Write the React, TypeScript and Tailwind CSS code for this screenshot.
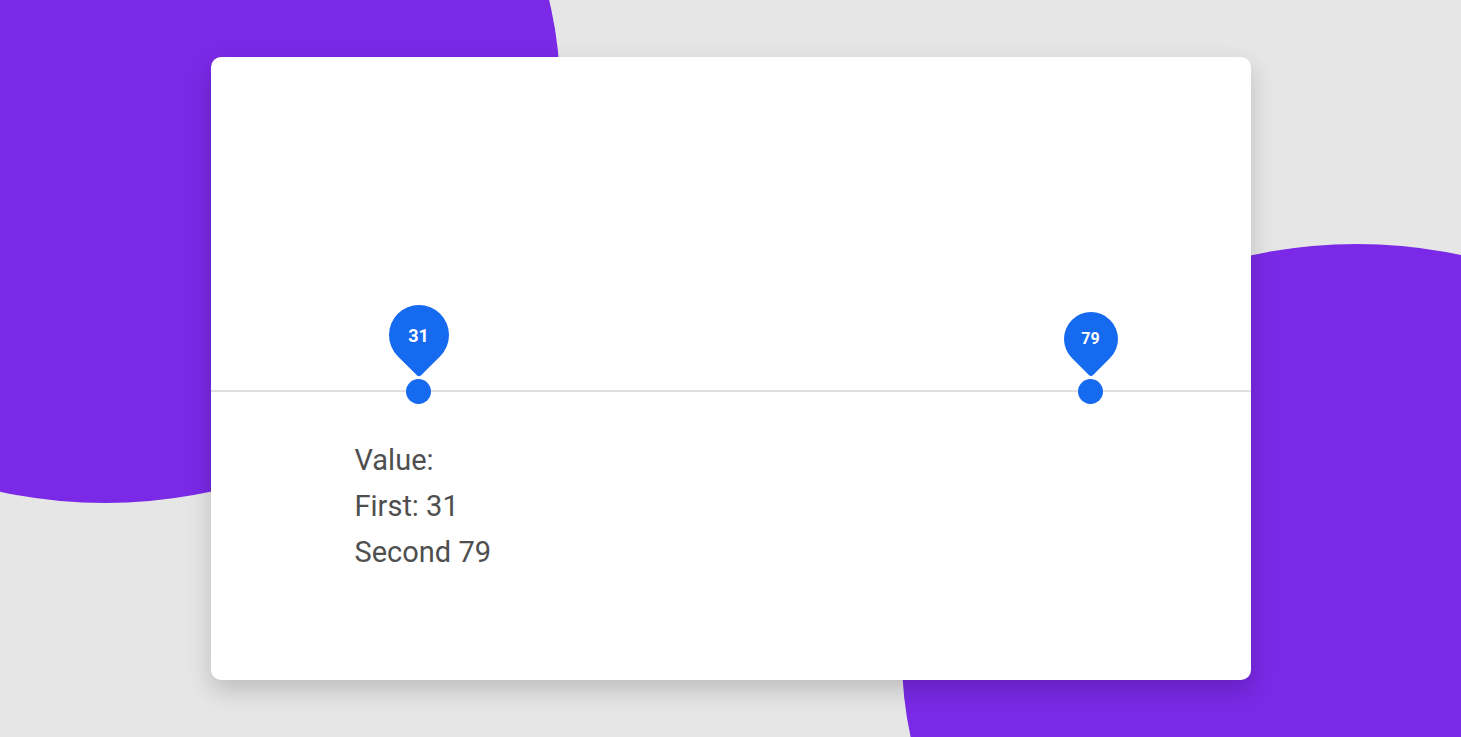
import type { CSSProperties } from 'react'

const TRACK_ORIGIN = -226
const STEP = 14

interface PinProps {
  value: number
  active?: boolean
}

function SliderThumb({ value, active }: PinProps) {
  const style: CSSProperties = { left: TRACK_ORIGIN + value * STEP }

  return (
    <div className="absolute top-1/2" style={style}>
      {active ? (
        <div className="absolute left-[-30px] top-[-86px] flex size-[60px] items-center justify-center">
          <div className="absolute inset-0 rotate-[-45deg] rounded-[50%_50%_50%_3px] bg-[#166af0]" />
          <span className="relative text-[18px] font-bold text-white">{value}</span>
        </div>
      ) : (
        <div className="absolute left-[-27px] top-[-79px] flex size-[54px] items-center justify-center">
          <div className="absolute inset-0 rotate-[-45deg] rounded-[50%_50%_50%_3px] bg-[#166af0]" />
          <span className="relative text-[16px] font-bold text-white">{value}</span>
        </div>
      )}
      <div className="absolute left-[-12.5px] top-[-12.5px] size-[25px] rounded-full bg-[#166af0]" />
    </div>
  )
}

export default function App() {
  const first = 31
  const second = 79

  return (
    <div className="relative flex h-[737px] w-full items-center justify-center overflow-hidden bg-[#e6e6e6] font-['Roboto',sans-serif]">
      <div className="absolute left-[-350px] top-[-323px] h-[826px] w-[910px] rounded-[50%] bg-[#7a29e6]" />
      <div className="absolute left-[902px] top-[244px] h-[826px] w-[910px] rounded-[50%] bg-[#7a29e6]" />

      <div className="relative flex h-[623px] w-[1040px] flex-col rounded-[10px] bg-white shadow-[0_10px_25px_rgba(0,0,0,0.18)]">
        <div className="relative mt-[333px] h-[2px] bg-[#e0e0e0]">
          <SliderThumb value={first} active />
          <SliderThumb value={second} />
        </div>

        <div className="mt-[45px] pl-[144px] text-[29px] leading-[46px] text-[#4f4f4f]">
          <p>Value:</p>
          <p>First: {first}</p>
          <p>Second {second}</p>
        </div>
      </div>
    </div>
  )
}
